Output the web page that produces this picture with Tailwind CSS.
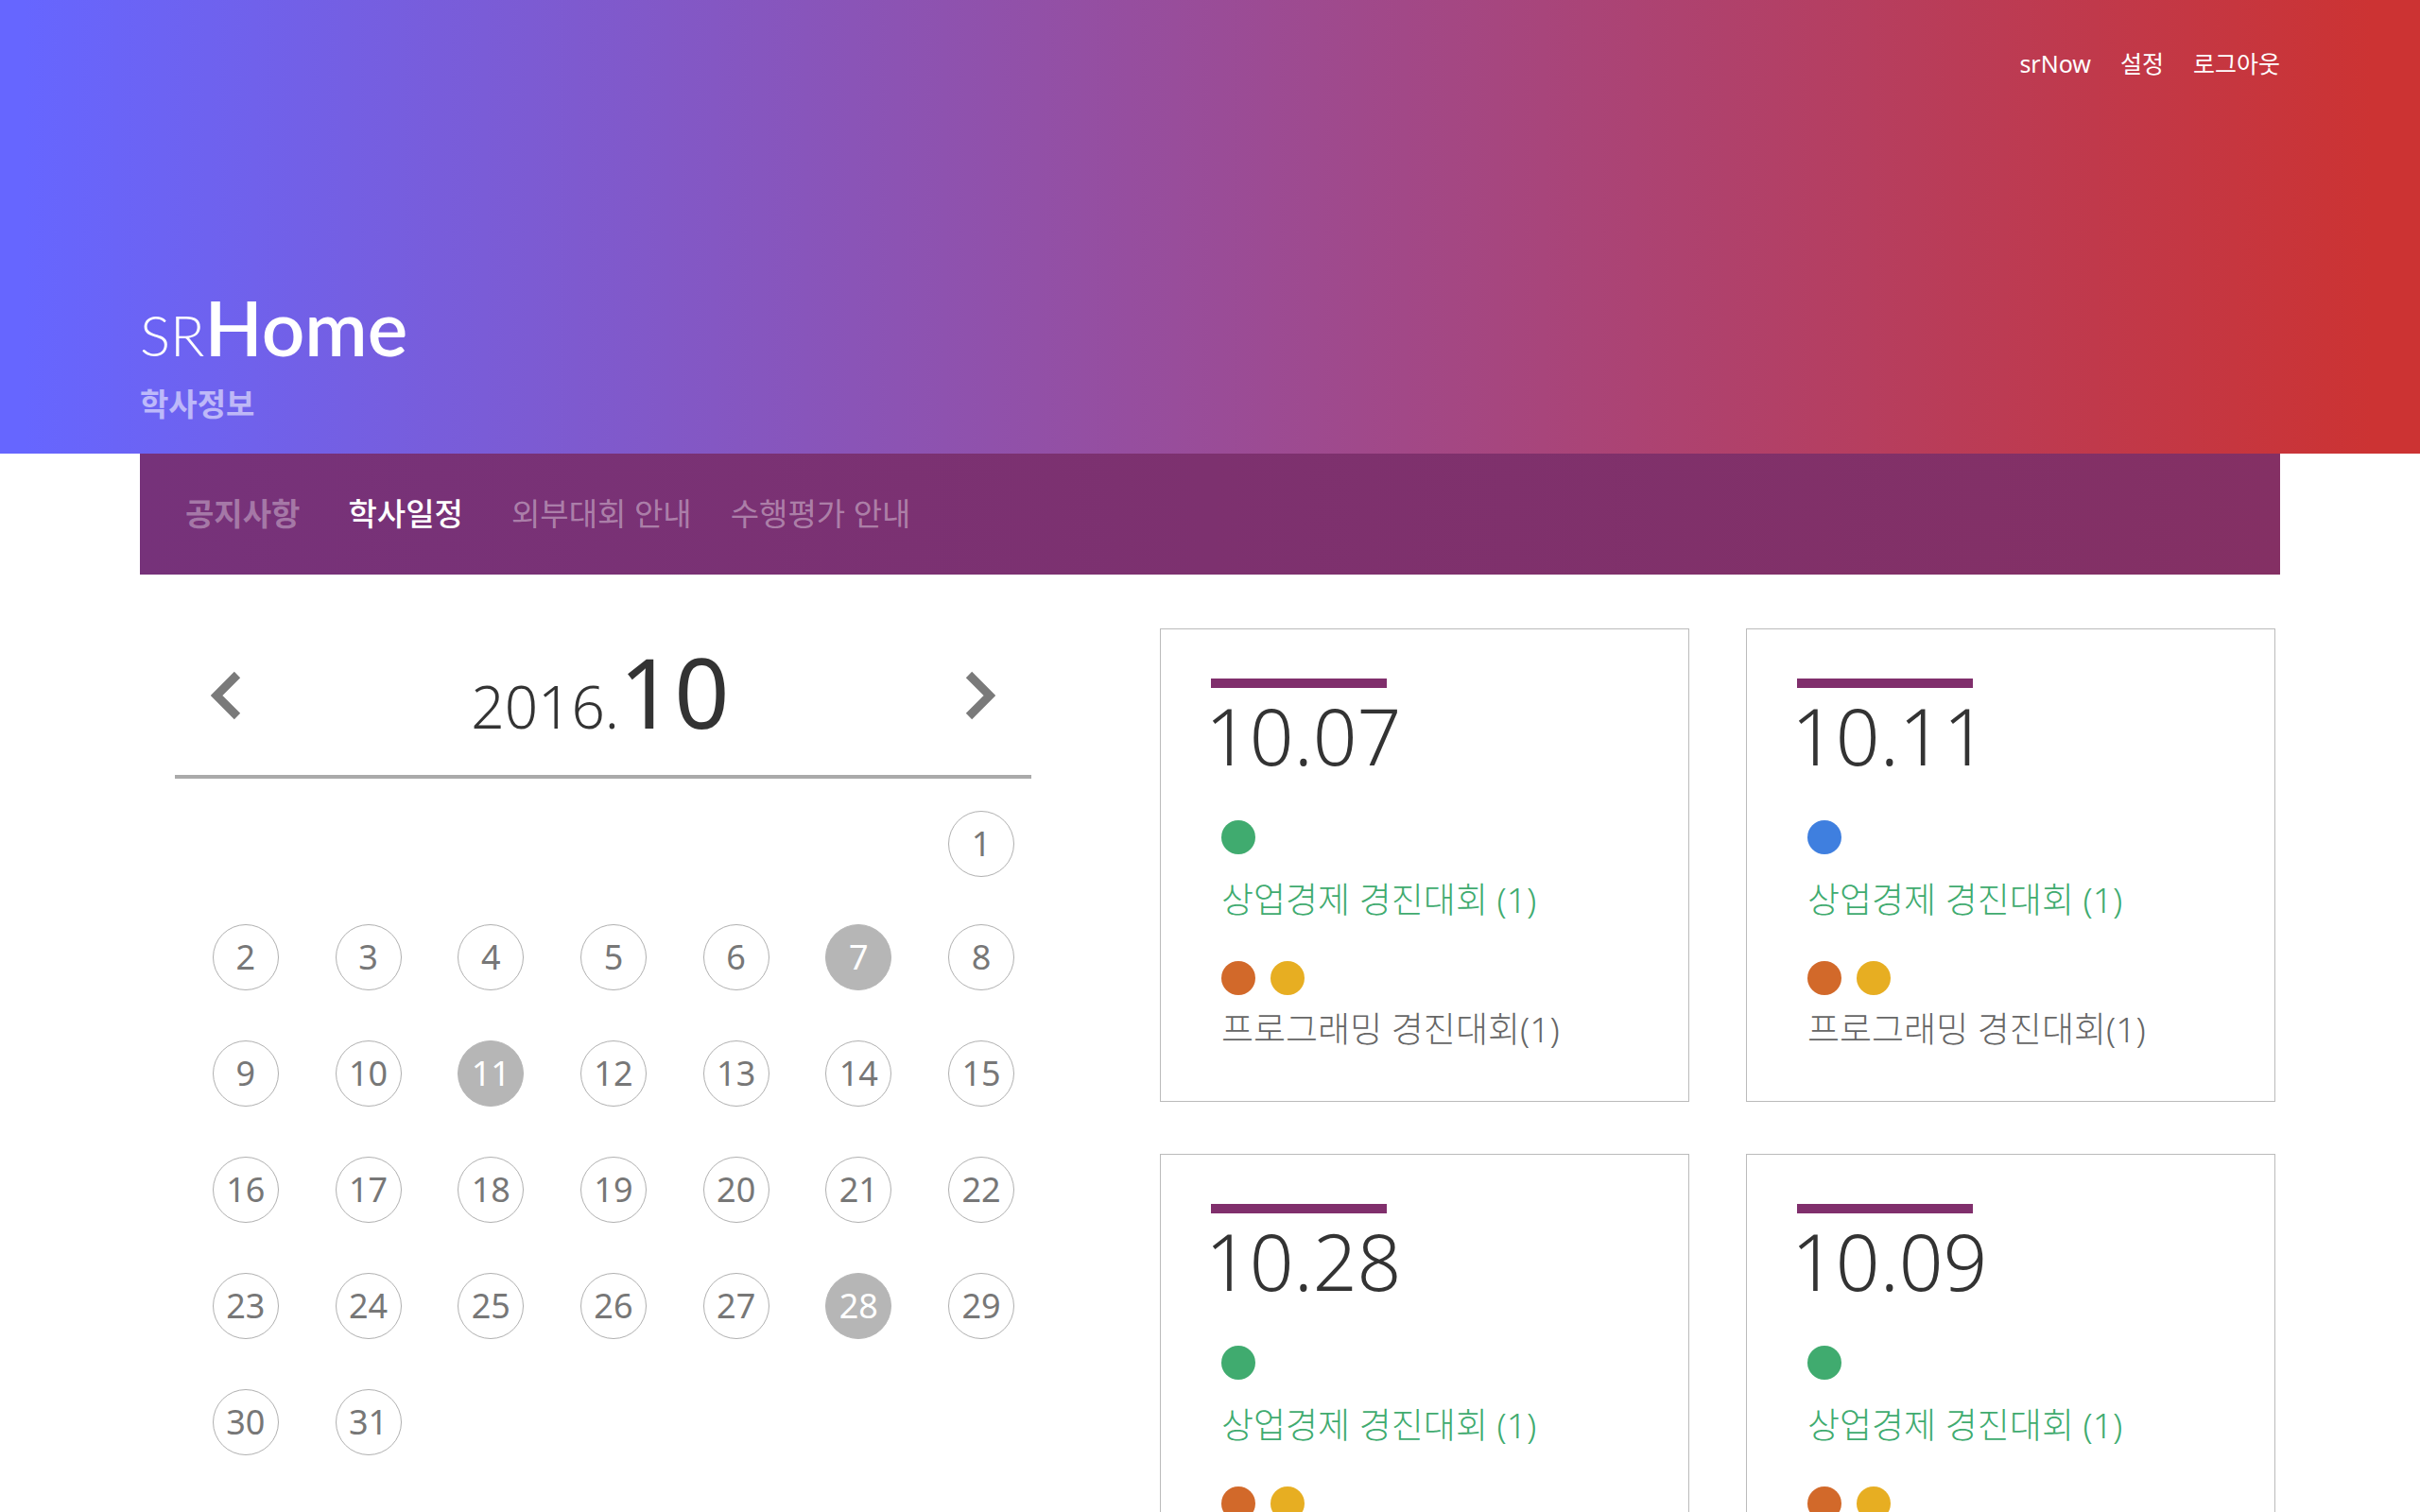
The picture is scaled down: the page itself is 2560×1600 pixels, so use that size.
<!DOCTYPE html>
<html lang="ko">
<head>
<meta charset="utf-8">
<title>SRHome 학사일정</title>
<meta name="viewport" content="width=device-width, initial-scale=1">
<script src="https://cdn.jsdelivr.net/npm/@tailwindcss/browser@4"></script>
</head>
<body class="bg-white font-['Noto_Sans','Noto_Sans_CJK_KR',sans-serif] text-[#333]">
<header class="flex h-[480px] flex-col justify-between bg-linear-to-r/srgb from-[#6666ff] from-1% to-[#cc3333] to-98% px-[148px] pt-[47px] pb-[28px] text-white">
  <nav aria-label="계정" class="flex justify-end gap-[31px] text-[25px] leading-[40px]">
    <a href="#now">srNow</a>
    <a href="#settings">설정</a>
    <a href="#logout">로그아웃</a>
  </nav>
  <div>
    <h1 class="flex items-baseline font-['Lato',sans-serif] leading-[100px]"><span class="text-[60px] font-light">SR</span><span class="text-[80px] font-semibold">Home</span></h1>
    <p class="text-[33px] leading-[48px] font-bold text-white/55">학사정보</p>
  </div>
</header>

<div class="px-[148px]">
  <nav aria-label="학사정보" class="flex h-[128px] items-center gap-[51px] bg-linear-to-r/srgb from-[#76327a] to-[#843064] px-[48px] text-[33px] leading-[48px] text-white/40">
    <a href="#notice" class="font-bold text-white/35">공지사항</a>
    <a href="#schedule" aria-current="page" class="font-medium text-white">학사일정</a>
    <a href="#contest">외부대회 안내</a>
    <a href="#assessment" class="-ml-[10px]">수행평가 안내</a>
  </nav>

  <main class="grid grid-cols-[906fr_1180fr] items-start gap-x-[136px] pt-[57px] pr-[5px] pl-[37px]">
    <section aria-label="달력">
      <div class="flex h-[159px] items-center justify-between border-b-4 border-[#aaa] px-[38px] pb-[14px]">
        <button type="button" aria-label="이전 달" class="text-[#7a7a7a]">
          <svg width="32" height="52" viewBox="0 0 32 52" fill="none" stroke="currentColor" stroke-width="9"><path d="M28 4 6 26l22 22"/></svg>
        </button>
        <h2 class="pt-[26px] pr-[6px] leading-[120px]"><span class="text-[62px] font-light">2016.</span><span class="text-[102px]">10</span></h2>
        <button type="button" aria-label="다음 달" class="text-[#7a7a7a]">
          <svg width="32" height="52" viewBox="0 0 32 52" fill="none" stroke="currentColor" stroke-width="9"><path d="m4 4 22 22L4 48"/></svg>
        </button>
      </div>
      <table class="mt-[10px] ml-[10px] w-[calc(100%+2px)] table-fixed border-collapse">
        <tbody id="days"></tbody>
      </table>
    </section>
    <section id="cards" aria-label="일정" class="grid grid-cols-2 gap-x-[60px] gap-y-[55px] pb-[57px]"></section>
  </main>
</div>

<script>
  const marked = [7, 11, 28];
  const firstColumn = 6;
  let rows = '';
  for (let week = 0; week < 6; week++) {
    let cells = '';
    for (let col = 0; col < 7; col++) {
      const day = week * 7 + col - firstColumn + 1;
      const look = marked.includes(day)
        ? 'border-[#b6b6b6] bg-[#b6b6b6] text-white'
        : 'border-[#b0b0b0] text-[#777]';
      cells += '<td class="p-0">' + (day > 0 && day < 32
        ? `<button type="button" class="mx-auto flex size-[70px] items-center justify-center rounded-full border text-[36px] leading-[48px] ${look}">${day}</button>`
        : '') + '</td>';
    }
    rows += `<tr class="${week ? 'h-[123px]' : 'h-[117px]'}">${cells}</tr>`;
  }
  document.getElementById('days').innerHTML = rows;

  const events = [
    ['10.07', 'bg-[#40ab6f]'],
    ['10.11', 'bg-[#3f7fdf]'],
    ['10.28', 'bg-[#40ab6f]'],
    ['10.09', 'bg-[#40ab6f]'],
  ];
  document.getElementById('cards').innerHTML = events.map(([date, dot]) => `
    <article class="h-[501px] border border-[#bbb] px-[53px] pt-[52px]">
      <div class="h-[10px] w-[186px] bg-[#802f6c]"></div>
      <h3 class="-ml-[6px] text-[82px] leading-[100px] font-light">${date}</h3>
      <div class="px-[11px] text-[37px] leading-[48px] font-light">
        <div class="mt-[40px] flex gap-[16px]"><span class="size-[36px] rounded-full ${dot}"></span></div>
        <p class="mt-[24px] text-[#40ab6f]">상업경제 경진대회 (1)</p>
        <div class="mt-[41px] flex gap-[16px]"><span class="size-[36px] rounded-full bg-[#d2692a]"></span><span class="size-[36px] rounded-full bg-[#e7ae22]"></span></div>
        <p class="mt-[12px] text-[#666]">프로그래밍 경진대회(1)</p>
      </div>
    </article>`).join('');
</script>
</body>
</html>
